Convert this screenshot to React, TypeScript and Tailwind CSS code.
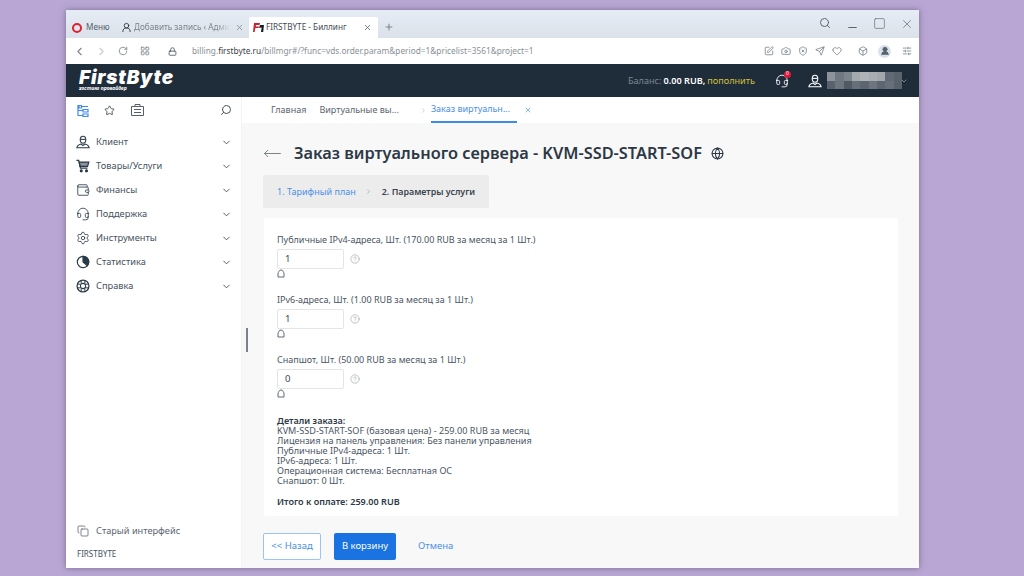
import { ChevronDown, ChevronLeft, ChevronRight, RotateCw, LayoutGrid, Lock, Search, X, Plus, Minus, Square, Star, Camera, ShieldX, Send, Heart, Box, SlidersHorizontal, Wallet, Headset, Settings, UserRound, Globe, Copy, CircleHelp, MoveLeft, SquarePen } from "lucide-react";

function Agent({ size = 14, className = "" }: { size?: number; className?: string }) {
  return (
    <svg width={size} height={size} viewBox="0 0 16 16" fill="none" stroke="currentColor" strokeWidth="1.2" className={className}>
      <path d="M4.8 5.5C4.8 3 6.2 1.5 8 1.5s3.2 1.5 3.2 4-1.4 4-3.2 4-3.2-1.5-3.2-4z" />
      <path d="M4.8 5h6.4" />
      <path d="M1 14.5c.4-2.5 2.4-3.6 4.8-4.2L8 12l2.2-1.7c2.4.6 4.4 1.7 4.8 4.2z" />
    </svg>
  );
}

function Cart({ size = 14, className = "" }: { size?: number; className?: string }) {
  return (
    <svg width={size} height={size} viewBox="0 0 16 16" fill="none" stroke="currentColor" strokeWidth="1.4" className={className}>
      <path d="M.5 1.5h2.6l2 9h8" />
      <path d="M3.6 3.5h11l-1.4 5H4.7z" fill="currentColor" fillOpacity="0.55" />
      <circle cx="6" cy="13.5" r="1.1" fill="currentColor" />
      <circle cx="12" cy="13.5" r="1.1" fill="currentColor" />
    </svg>
  );
}

function Pie({ size = 14, className = "" }: { size?: number; className?: string }) {
  return (
    <svg width={size} height={size} viewBox="0 0 16 16" fill="none" stroke="currentColor" strokeWidth="1.3" className={className}>
      <circle cx="8" cy="8" r="6.5" />
      <path d="M8 1.5A6.5 6.5 0 0 1 13 12.2L8 8z" fill="currentColor" />
    </svg>
  );
}

function Buoy({ size = 14, className = "" }: { size?: number; className?: string }) {
  return (
    <svg width={size} height={size} viewBox="0 0 16 16" fill="none" stroke="currentColor" className={className}>
      <circle cx="8" cy="8" r="6.8" strokeWidth="1.4" />
      <circle cx="8" cy="8" r="3" strokeWidth="1.2" />
      <path d="M5.9 1.6v3.6M10.1 1.6v3.6M5.9 10.8v3.6M10.1 10.8v3.6M1.6 5.9h3.6M1.6 10.1h3.6M10.8 5.9h3.6M10.8 10.1h3.6" strokeWidth="1.1" />
    </svg>
  );
}

const menu = [
  { label: "Клиент", icon: Agent },
  { label: "Товары/Услуги", icon: Cart },
  { label: "Финансы", icon: Wallet },
  { label: "Поддержка", icon: Headset },
  { label: "Инструменты", icon: Settings },
  { label: "Статистика", icon: Pie },
  { label: "Справка", icon: Buoy },
];

const fields = [
  { label: "Публичные IPv4-адреса, Шт. (170.00 RUB за месяц за 1 Шт.)", value: "1" },
  { label: "IPv6-адреса, Шт. (1.00 RUB за месяц за 1 Шт.)", value: "1" },
  { label: "Снапшот, Шт. (50.00 RUB за месяц за 1 Шт.)", value: "0" },
];

const details = [
  "KVM-SSD-START-SOF (базовая цена) - 259.00 RUB за месяц",
  "Лицензия на панель управления: Без панели управления",
  "Публичные IPv4-адреса: 1 Шт.",
  "IPv6-адреса: 1 Шт.",
  "Операционная система: Бесплатная ОС",
  "Снапшот: 0 Шт.",
];

const blur = [
  "#8d939b", "#6f7780", "#7d848c", "#a4a9ae", "#b0b4b8", "#a9adb2", "#a2a7ac", "#616a74", "#59626d",
  "#59626c", "#6d757e", "#505a65", "#666e78", "#5c6570", "#6d757e", "#5d6671", "#67707a", "#58616c",
];

function Field({ label, value }: { label: string; value: string }) {
  return (
    <div className="h-[60px]">
      <div className="h-[16px] text-[9px] leading-[13px] text-[#4b5563]">{label}</div>
      <div className="flex items-center gap-[6px]">
        <div className="flex h-[20px] w-[67px] items-center rounded-[2px] border border-[#e3e5e8] bg-white pl-[7px] text-[9.5px] text-[#3c4754]">{value}</div>
        <CircleHelp size={10} strokeWidth={1.2} className="text-[#858b92]" />
      </div>
      <svg width="8" height="9" viewBox="0 0 8 9" fill="none" stroke="#5f6b76">
        <path d="M1 8h6V5C7 3 5.5 1 4 1S1 3 1 5z" />
      </svg>
    </div>
  );
}

export default function App() {
  return (
    <div className="h-[576px] w-[1024px] overflow-hidden bg-[#b9a6d4] pl-[66px] pt-[10px] font-['Noto_Sans',sans-serif]">
      <div className="flex h-[558px] w-[853px] flex-col bg-white shadow-[0_0_6px_rgba(70,60,90,0.55)]">
        {/* tabs */}
        <div className="flex h-[28px] items-end bg-gradient-to-b from-[#e6ecf5] to-[#dbe2ea] pl-[6px] text-[8.2px] text-[#555d66]">
          <div className="flex h-[21px] w-[49px] items-center gap-[4px]">
            <span className="h-[10px] w-[10px] rounded-full border-[2.5px] border-[#e0202f]" />
            <span>Меню</span>
          </div>
          <div className="flex h-[21px] w-[128px] items-center gap-[2px] text-[#7c838a]">
            <UserRound size={11} className="text-[#333b44]" />
            <span className="w-[96px] overflow-hidden whitespace-nowrap [mask-image:linear-gradient(to_right,black_85%,transparent)]">Добавить запись ‹ Админ</span>
            <X size={9} className="ml-[3px] text-[#7c838a]" />
          </div>
          <div className="flex h-[21px] w-[129px] items-center rounded-t-[2px] bg-white pl-[4px] text-[#444b53]">
            <svg width="11" height="9" viewBox="0 0 11 9" className="mr-[2px]">
              <path d="M1 0h6L6.5 2H3L2.7 3.5H6L5.5 5H2.4L1.6 9H0z" fill="#c8202d" />
              <path d="M7 2h4L10.2 9H8L8.6 4.5 6 5z" fill="#16202a" />
            </svg>
            <span>FIRSTBYTE - Биллинг</span>
            <X size={9} className="ml-auto mr-[6px] text-[#555d66]" />
          </div>
          <Plus size={10} className="mb-[6px] ml-[6px] text-[#6a727a]" />
          <div className="ml-auto flex h-full items-start gap-[14px] pr-[5px] pt-[7px] text-[#5d656d]">
            <Search size={12} className="mr-[1px]" />
            <Minus size={13} className="mt-[4px]" />
            <Square size={13} strokeWidth={1.2} />
            <X size={14} strokeWidth={1.2} />
          </div>
        </div>
        {/* address bar */}
        <div className="flex h-[26px] items-center pl-[7px] text-[#7d848b]">
          <ChevronLeft size={13} />
          <ChevronRight size={13} className="ml-[9px] text-[#c8cbcf]" />
          <RotateCw size={10} className="ml-[10px]" />
          <LayoutGrid size={10} className="ml-[12px]" />
          <Lock size={9} className="ml-[18px] text-[#3e454c]" />
          <div className="ml-[15px] text-[8.3px] text-[#8a9096]">
            billing.<span className="text-[#3c434a]">firstbyte.ru</span>/billmgr#/?func=vds.order.param&amp;period=1&amp;pricelist=3561&amp;project=1
          </div>
          <div className="ml-auto flex items-center gap-[7px] pr-[7px]">
            <SquarePen size={10} />
            <Camera size={10} />
            <ShieldX size={10} />
            <Send size={10} />
            <Heart size={10} />
            <Box size={10} className="ml-[9px]" />
            <span className="ml-[3px] flex h-[13px] w-[13px] items-center justify-center rounded-full bg-[#dbe1ea]">
              <UserRound size={10} fill="currentColor" className="text-[#55606c]" />
            </span>
            <SlidersHorizontal size={10} className="ml-[4px]" />
          </div>
        </div>
        {/* header */}
        <div className="flex h-[33px] items-center bg-[#1f2d3b] pl-[13px]">
          <div className="flex flex-col text-white">
            <span className="font-['Inter',sans-serif] text-[19px] font-black italic leading-[15px] tracking-[0.8px]">FirstByte</span>
            <span className="text-[5px] font-bold italic leading-[6px]">хостинг провайдер</span>
          </div>
          <div className="ml-auto flex items-center pr-[11px] text-[9.15px]">
            <span className="text-[#7b858f]">Баланс:</span>
            <span className="ml-[2px] font-semibold text-white">0.00 RUB,</span>
            <span className="ml-[2px] text-[#d4c03a]">пополнить</span>
            <div className="relative ml-[20px]">
              <Headset size={14} strokeWidth={1.5} className="text-white" />
              <span className="absolute right-[-2px] top-[-3px] flex h-[7px] w-[7px] items-center justify-center rounded-full bg-[#e0173c] text-[5px] text-white">0</span>
            </div>
            <Agent size={14} className="ml-[19px] text-white" />
            <div className="ml-[5px] grid h-[17px] w-[75px] grid-cols-9 grid-rows-2">
              {blur.map((c, i) => (
                <span key={i} style={{ backgroundColor: c }} />
              ))}
            </div>
            <ChevronDown size={8} className="ml-[-2px] text-[#aab0b6]" />
          </div>
        </div>
        <div className="flex min-h-0 flex-1">
          {/* sidebar */}
          <div className="relative flex w-[176px] shrink-0 flex-col border-r border-[#f2f3f4] bg-white">
            <div className="flex h-[26px] items-center pl-[11px] pr-[9px]">
              <svg width="12" height="13" viewBox="0 0 12 13" fill="none" stroke="#3f8ae8" strokeWidth="1.2">
                <path d="M2 1.5h2.5v2.5H2zM6 5.5h5v2.5H6zM6 10h5v2.5H6zM1 1v10.5h5M1 6.5h5M4.5 2.5H11" />
              </svg>
              <Star size={11} className="ml-[15px] text-[#46525e]" />
              <svg width="13" height="12" viewBox="0 0 13 12" fill="none" stroke="#55606c" className="ml-[16px]">
                <path d="M.5 2.5h12v9H.5zM4 2.5V.5h5v2M3 5.5h7M3 8.5h7" />
              </svg>
              <Search size={12} className="ml-auto scale-x-[-1] text-[#46525e]" />
            </div>
            <div className="mt-[7px]">
              {menu.map(({ label, icon: Icon }) => (
                <div key={label} className="flex h-[24px] items-center pl-[10px] pr-[9px] text-[9.25px] text-[#46525e]">
                  <Icon size={14} strokeWidth={1.4} className="text-[#2b3a48]" />
                  <span className="ml-[6px]">{label}</span>
                  <ChevronDown size={11} className="ml-auto" />
                </div>
              ))}
            </div>
            <div className="mt-auto pb-[8px] pl-[11px] text-[#5a6570]">
              <div className="flex items-center text-[9.2px]">
                <Copy size={12} strokeWidth={1.4} className="text-[#46525e]" />
                <span className="ml-[7px]">Старый интерфейс</span>
              </div>
              <div className="mt-[10px] text-[8px] text-[#46525e]">FIRSTBYTE</div>
            </div>
            <span className="absolute right-[-7px] top-[231px] h-[24px] w-[2px] bg-[#7b828a]" />
          </div>
          {/* main */}
          <div className="flex min-w-0 flex-1 flex-col bg-[#f8f8f8]">
            <div className="flex h-[26px] items-center bg-white pl-[29px] text-[9px] text-[#5a6570]">
              <span>Главная</span>
              <span className="ml-[13px]">Виртуальные вы...</span>
              <ChevronRight size={7} className="ml-[21px] text-[#aeb3b8]" />
              <div className="ml-[4px] flex h-[26px] w-[86px] items-center border-b-2 border-[#3f8ae8] text-[#4a90e8]">Заказ виртуальн...</div>
              <X size={8} className="ml-[7px] text-[#4a90e8]" />
            </div>
            <div className="px-[21px]">
              <div className="mt-[17px] flex h-[26px] items-center">
                <MoveLeft size={19} strokeWidth={1} className="text-[#5a6570]" />
                <h1 className="ml-[12px] text-[16.35px] font-semibold text-[#2c3845]">Заказ виртуального сервера - KVM-SSD-START-SOF</h1>
                <Globe size={13} className="ml-[9px] text-[#2c3845]" />
              </div>
              <div className="mt-[9px] flex h-[33px] w-[226px] items-center rounded-[2px] bg-[#ececec] pl-[14px] text-[9px]">
                <span className="text-[#4a90e8]">1. Тарифный план</span>
                <ChevronRight size={7} className="ml-[9px] text-[#8a9096]" />
                <span className="ml-[10px] text-[8.9px] font-semibold text-[#3a444f]">2. Параметры услуги</span>
              </div>
              <div className="ml-[1px] mt-[10px] h-[298px] rounded-[2px] bg-white pl-[13px] pt-[15px]">
                {fields.map((f) => (
                  <Field key={f.label} label={f.label} value={f.value} />
                ))}
                <div className="mt-[3px] text-[9.1px] leading-[10px] text-[#4b5563]">
                  <div className="font-semibold text-[#2c3845]">Детали заказа:</div>
                  {details.map((d) => (
                    <div key={d}>{d}</div>
                  ))}
                  <div className="mt-[11px] font-semibold text-[#2c3845]">Итого к оплате: 259.00 RUB</div>
                </div>
              </div>
              <div className="mt-[17px] flex items-center text-[9.5px]">
                <div className="flex h-[27px] w-[58px] items-center justify-center rounded-[2px] border border-[#9cc4f2] bg-white text-[#4a90e8]">&lt;&lt; Назад</div>
                <div className="ml-[13px] flex h-[27px] w-[62px] items-center justify-center rounded-[2px] bg-[#1a73e0] text-white">В корзину</div>
                <div className="ml-[22px] text-[#4a90e8]">Отмена</div>
              </div>
            </div>
          </div>
        </div>
      </div>
    </div>
  );
}
